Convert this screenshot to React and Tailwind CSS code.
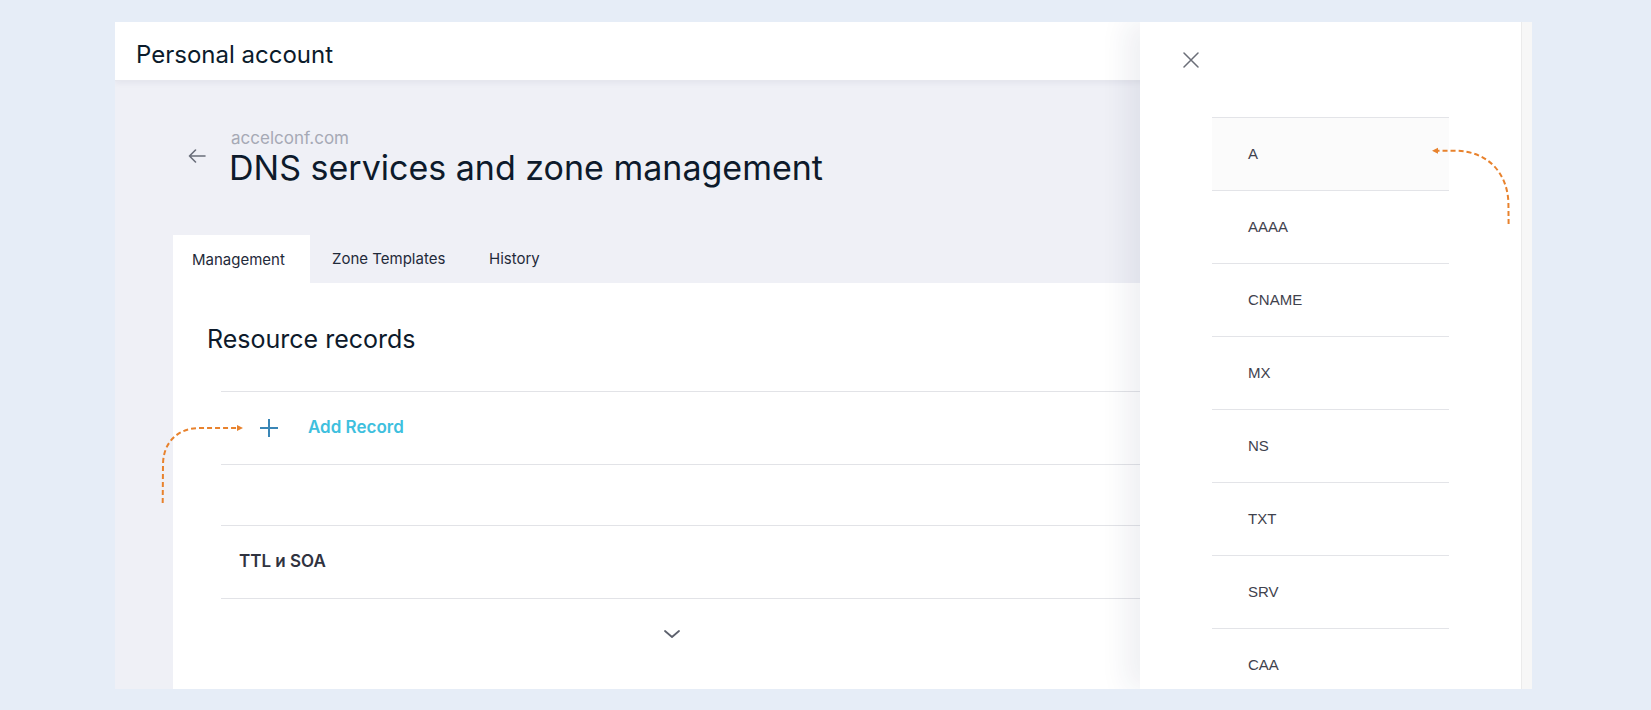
import React from 'react';

const recordTypes = ['A', 'AAAA', 'CNAME', 'MX', 'NS', 'TXT', 'SRV', 'CAA'];

function BackArrow() {
  return (
    <svg width="18" height="14" viewBox="0 0 18 14" fill="none" stroke="#6a6e7a" strokeWidth="1.6" strokeLinecap="round" strokeLinejoin="round">
      <path d="M17 7H1.5M7.5 1L1.5 7l6 6" />
    </svg>
  );
}

function PlusIcon() {
  return (
    <svg width="18" height="18" viewBox="0 0 18 18" fill="none" stroke="#3a86b6" strokeWidth="2">
      <path d="M9 0v18M0 9h18" />
    </svg>
  );
}

function CloseIcon() {
  return (
    <svg width="16" height="16" viewBox="0 0 16 16" fill="none" stroke="#6b6e78" strokeWidth="1.5" strokeLinecap="round">
      <path d="M1 1l14 14M15 1L1 15" />
    </svg>
  );
}

function ChevronDown() {
  return (
    <svg width="16" height="8" viewBox="0 0 16 8" fill="none" stroke="#5d616d" strokeWidth="1.8" strokeLinecap="round" strokeLinejoin="round">
      <path d="M1 1l7 6 7-6" />
    </svg>
  );
}

export default function App() {
  return (
    <div className="relative w-[1651px] h-[710px] bg-[#e6edf7] pt-[22px] pl-[115px] overflow-hidden font-[Inter,sans-serif]">
      <div className="relative w-[1417px] h-[667px] bg-[#eff0f6] overflow-hidden flex flex-col">
        {/* Header */}
        <div className="h-[59px] shrink-0 bg-white flex items-center pl-[21px] pt-[7px] border-b border-[#e6e7ee] shadow-[0_2px_6px_rgba(30,40,80,0.06)]">
          <span className="text-[24px] text-[#0b1b2b]">Personal account</span>
        </div>

        {/* Title */}
        <div className="flex items-start pl-[73px] pt-[47px]">
          <div className="mt-[21px] shrink-0">
            <BackArrow />
          </div>
          <div className="ml-[25px]">
            <div className="text-[17px] leading-[20px] text-[#a6a9b5]">accelconf.com</div>
            <h1 className="text-[34px] leading-[40px] text-[#0d1a2b] -ml-[2px]">DNS services and zone management</h1>
          </div>
        </div>

        {/* Tabs */}
        <div className="ml-[58px] mt-[47px] flex h-[48px] text-[15px] text-[#1f2a3a]">
          <div className="w-[137px] bg-white pl-[19px] pt-[2px] flex items-center">Management</div>
          <div className="w-[157px] pl-[22px] flex items-center">Zone Templates</div>
          <div className="pl-[22px] flex items-center">History</div>
        </div>

        {/* Card */}
        <div className="ml-[58px] w-[1100px] flex-1 bg-white pt-[41px]">
          <h2 className="pl-[34px] text-[25px] leading-[30px] text-[#0d1a2b]">Resource records</h2>
          <div className="ml-[48px] mt-[37px]">
            <div className="h-[73px] border-t border-[#e2e3e7] flex items-center pl-[39px]">
              <PlusIcon />
              <span className="ml-[30px] text-[17px] font-semibold text-[#3ec0de]">Add Record</span>
            </div>
            <div className="h-[61px] border-t border-[#e2e3e7]" />
            <div className="h-[73px] border-t border-[#e2e3e7] flex items-center pl-[18px]">
              <span className="text-[17px] font-semibold text-[#30333f]">TTL и SOA</span>
            </div>
            <div className="border-t border-[#e2e3e7] pt-[31px]">
              <div className="w-[902px] flex justify-center">
                <ChevronDown />
              </div>
            </div>
          </div>
        </div>

        {/* Drawer */}
        <div className="absolute top-0 right-0 bottom-0 w-[392px] flex shadow-[-14px_0_26px_rgba(30,40,80,0.07)]">
          <div className="flex-1 bg-white pl-[43px] pt-[30px]">
            <button className="block">
              <CloseIcon />
            </button>
            <ul className="ml-[29px] mt-[49px] w-[237px] font-['Liberation_Sans',Arial,sans-serif] text-[15px] text-[#3f424d]">
              {recordTypes.map((type, i) => (
                <li
                  key={type}
                  className={`h-[73px] border-t border-[#e3e4e8] flex items-center pl-[36px] ${i === 0 ? 'bg-[#fbfbfb]' : ''}`}
                >
                  {type}
                </li>
              ))}
            </ul>
          </div>
          <div className="w-[11px] border-l border-[#ebebeb] bg-[#f7f7f7]" />
        </div>
      </div>

      {/* Annotation arrows */}
      <svg className="absolute left-[150px] top-[415px]" width="100" height="95" viewBox="0 0 100 95" fill="none">
        <path d="M12.7 88L13 50C13 27 28 13 50 13L87 13" stroke="#e8822d" strokeWidth="2" strokeDasharray="5 3" />
        <polygon points="93,13 87,10 87,16" fill="#e8822d" />
      </svg>
      <svg className="absolute left-[1425px] top-[140px]" width="95" height="90" viewBox="0 0 95 90" fill="none">
        <path d="M83.6 84L83.4 62C82 32 62 11 30 10.7L13 10.7" stroke="#e8822d" strokeWidth="2" strokeDasharray="5 3" />
        <polygon points="7,10.7 13,7.7 13,13.7" fill="#e8822d" />
      </svg>
    </div>
  );
}
